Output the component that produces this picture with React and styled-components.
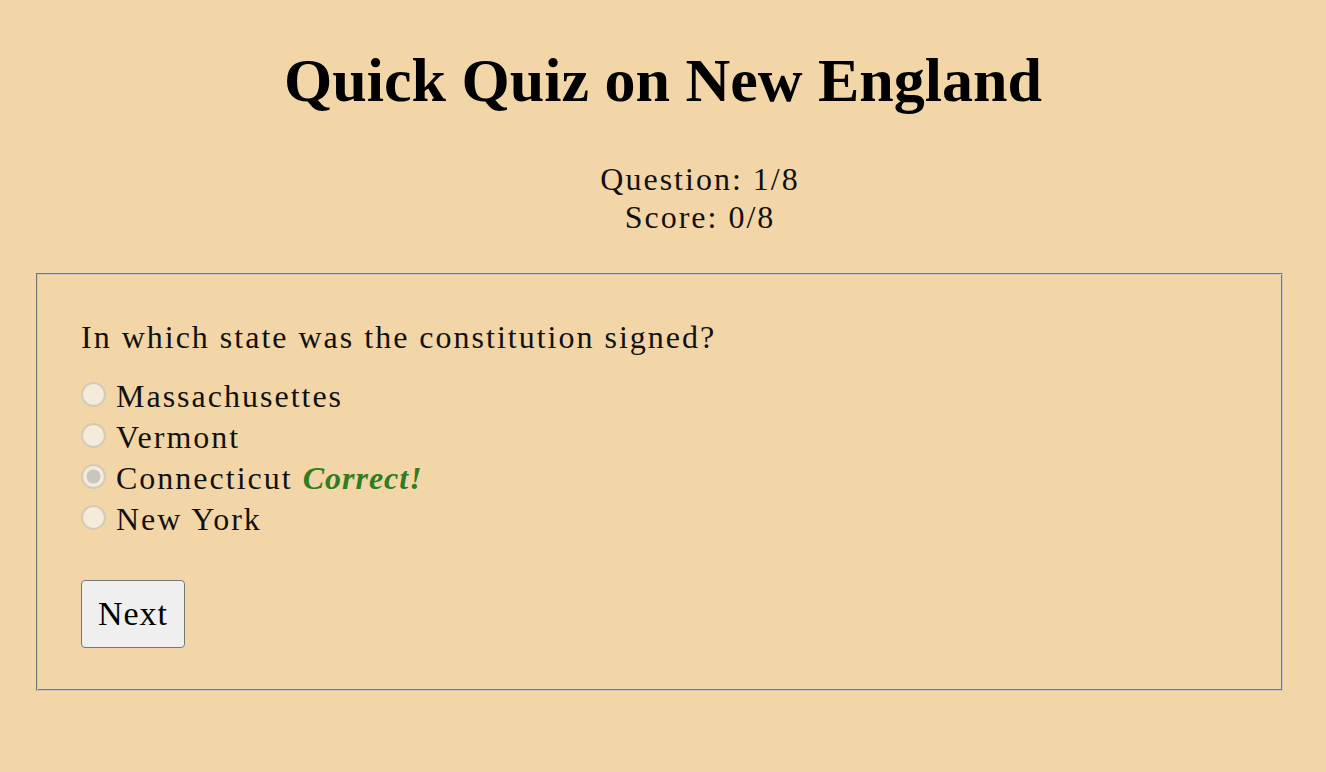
import { useState } from "react";
import styled, { createGlobalStyle } from "styled-components";

const GlobalStyle = createGlobalStyle`
  html, body {
    margin: 0;
    padding: 0;
    background: #f3d6a7;
  }
  body {
    font-family: "Liberation Serif", "Times New Roman", serif;
    color: #111;
  }
`;

const Page = styled.div`
  min-height: 772px;
  padding: 44px 36px 0 36px;
  box-sizing: border-box;
`;

const Title = styled.h1`
  margin: 0;
  text-align: center;
  font-size: 62px;
  line-height: 72px;
  font-weight: bold;
  color: #000;
`;

const Stats = styled.div`
  margin-top: 44px;
  padding-left: 74px;
  text-align: center;
  font-size: 32px;
  line-height: 38px;
  letter-spacing: 2px;
`;

const Box = styled.fieldset`
  margin: 37px 0 0 0;
  width: 1247px;
  box-sizing: border-box;
  border: 1px solid;
  border-color: #777 #c6c6c6 #c6c6c6 #777;
  box-shadow: inset 1px 1px #c6c6c6, inset -1px -1px #777;
  padding: 43px 44px 42px 44px;
  min-inline-size: 0;
`;

const Question = styled.p`
  margin: 0 0 19px 0;
  font-size: 32px;
  line-height: 40px;
  letter-spacing: 2px;
`;

const Options = styled.div`
  display: flex;
  flex-direction: column;
`;

const Option = styled.label`
  display: flex;
  align-items: center;
  gap: 10px;
  font-size: 32px;
  line-height: 41px;
  letter-spacing: 2px;
  cursor: pointer;
`;

const Radio = styled.input.attrs({ type: "radio" })`
  appearance: none;
  flex: none;
  margin: 0 0 5px 0;
  width: 25px;
  height: 25px;
  border-radius: 50%;
  border: 2px solid #d2c9b6;
  background: #f4ebdb;
  box-sizing: border-box;

  &:checked {
    background: radial-gradient(circle, #cbc6bd 0 6.5px, #f4ebdb 7.5px);
  }
`;

const Feedback = styled.span`
  color: #2f7d21;
  font-weight: bold;
  font-style: italic;
  letter-spacing: 1px;
`;

const NextButton = styled.button`
  margin-top: 40px;
  width: 104px;
  height: 68px;
  padding: 0;
  font-family: "Liberation Serif", "Times New Roman", serif;
  font-size: 34px;
  letter-spacing: 1px;
  color: #000;
  background: #efefef;
  border: 1px solid #767676;
  border-radius: 4px;
  cursor: pointer;
`;

const choices = ["Massachusettes", "Vermont", "Connecticut", "New York"];

export default function App() {
  const [picked, setPicked] = useState("Connecticut");

  return (
    <Page>
      <GlobalStyle />
      <Title>Quick Quiz on New England</Title>
      <Stats>
        <div>Question: 1/8</div>
        <div>Score: 0/8</div>
      </Stats>
      <Box>
        <Question>In which state was the constitution signed?</Question>
        <Options>
          {choices.map((c) => (
            <Option key={c}>
              <Radio
                name="q1"
                checked={picked === c}
                onChange={() => setPicked(c)}
              />
              <span>
                {c}{" "}
                {picked === c && c === "Connecticut" && (
                  <Feedback>Correct!</Feedback>
                )}
              </span>
            </Option>
          ))}
        </Options>
        <NextButton>Next</NextButton>
      </Box>
    </Page>
  );
}
